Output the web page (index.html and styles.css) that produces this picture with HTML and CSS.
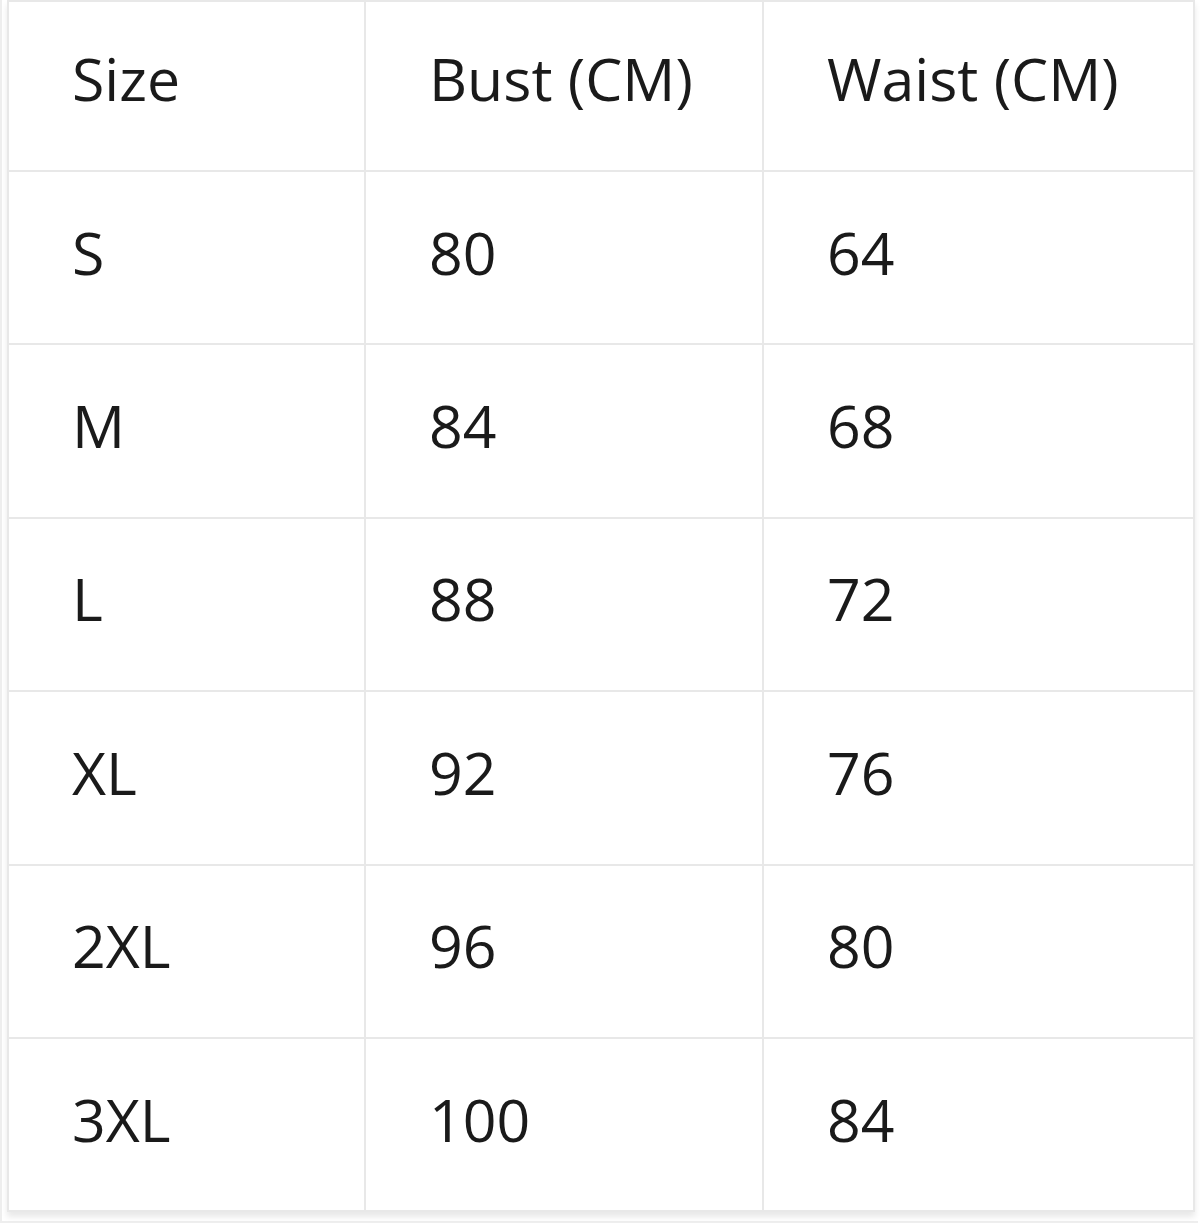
FILE: index.html
```html
<!DOCTYPE html>
<html>
<head>
<meta charset="utf-8">
<link rel="stylesheet" href="styles.css">
</head>
<body>
<div class="frame">
  <table class="size-table">
    <colgroup>
      <col class="c1"><col class="c2"><col class="c3">
    </colgroup>
    <thead>
      <tr><th>Size</th><th>Bust (CM)</th><th>Waist (CM)</th></tr>
    </thead>
    <tbody>
      <tr><td>S</td><td>80</td><td>64</td></tr>
      <tr><td>M</td><td>84</td><td>68</td></tr>
      <tr><td>L</td><td>88</td><td>72</td></tr>
      <tr><td>XL</td><td>92</td><td>76</td></tr>
      <tr><td>2XL</td><td>96</td><td>80</td></tr>
      <tr><td>3XL</td><td>100</td><td>84</td></tr>
    </tbody>
  </table>
</div>
</body>
</html>
```

FILE: styles.css
```css
html, body {
  margin: 0;
  padding: 0;
  background: #ffffff;
}
.frame {
  width: 1198px;
  height: 1223px;
  border-left: 2px solid #eeeeee;
  border-bottom: 2px solid #eeeeee;
  box-sizing: border-box;
  padding: 0 0 0 5px;
}
.size-table {
  border-collapse: collapse;
  table-layout: fixed;
  width: 1186px;
  box-shadow: 0 5px 6px rgba(0,0,0,0.09);
  font-family: "Open Sans", "Noto Sans", sans-serif;
  color: #1a1a1a;
}
.c1 { width: 357px; }
.c2 { width: 398px; }
.c3 { width: 431px; }
.size-table th,
.size-table td {
  border: 2px solid #e8e8e8;
  text-align: left;
  font-weight: 400;
  font-size: 59px;
  padding: 0 0 16px 63px;
  white-space: nowrap;
  box-sizing: border-box;
}
.size-table th {
  height: 170px;
}
.size-table td {
  height: 173.4px;
  padding-bottom: 12px;
}
```
